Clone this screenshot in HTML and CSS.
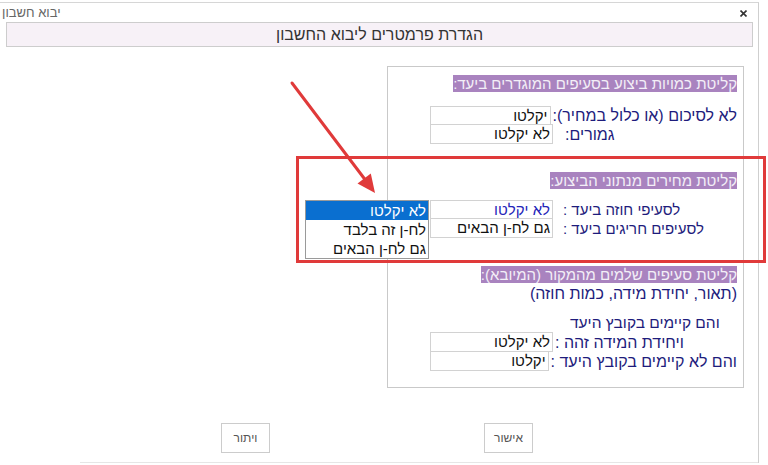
FILE: index.html
```html
<!DOCTYPE html>
<html lang="he">
<head>
<meta charset="utf-8">
<title>יבוא חשבון</title>
<link rel="stylesheet" href="styles.css">
</head>
<body>
<div class="screen">
  <div class="window">
    <div class="titlebar">
      <span class="title">יבוא חשבון</span>
      <svg class="close" width="7" height="7" viewBox="0 0 7 7"><path d="M0.5 0.5 L6.5 6.5 M6.5 0.5 L0.5 6.5" stroke="#333" stroke-width="1.6"/></svg>
    </div>
    <div class="header">הגדרת פרמטרים ליבוא החשבון</div>
    <div class="main">
      <div class="panel">
        <div class="heading"><span>קליטת כמויות ביצוע בסעיפים המוגדרים ביעד:</span></div>
        <div class="row first">
          <span class="label g2">לא לסיכום (או כלול במחיר):</span>
          <span class="box">יקלטו</span>
        </div>
        <div class="row">
          <span class="label g12">גמורים:</span>
          <span class="box">לא יקלטו</span>
        </div>

        <div class="heading section"><span>קליטת מחירים מנתוני הביצוע:</span></div>
        <div class="row first2">
          <span class="label small g10">לסעיפי חוזה ביעד :</span>
          <span class="box blue">לא יקלטו</span>
        </div>
        <div class="row">
          <span class="label small g10">לסעיפים חריגים ביעד :</span>
          <span class="box">גם לח-ן הבאים</span>
        </div>

        <div class="heading section"><span>קליטת סעיפים שלמים מהמקור (המיובא):</span></div>
        <div class="note">(תאור, יחידת מידה, כמות חוזה)</div>
        <div class="subline">והם קיימים בקובץ היעד</div>
        <div class="row">
          <span class="label g2">ויחידת המידה זהה :</span>
          <span class="box">לא יקלטו</span>
        </div>
        <div class="row">
          <span class="label g2">והם לא קיימים בקובץ היעד :</span>
          <span class="box">יקלטו</span>
        </div>
      </div>
    </div>
    <div class="buttons">
      <button class="btn">ויתור</button>
      <button class="btn">אישור</button>
    </div>
  </div>

  <div class="redbox"></div>
  <ul class="dropdown">
    <li class="selected">לא יקלטו</li>
    <li>לח-ן זה בלבד</li>
    <li>גם לח-ן הבאים</li>
  </ul>
  <svg class="arrow" width="768" height="465" viewBox="0 0 768 465">
    <line x1="292" y1="83" x2="365" y2="179.5" stroke="#e03a3a" stroke-width="3" stroke-linecap="round"/>
    <polygon points="375,193 357.5,183.6 370.8,173.6" fill="#e03a3a"/>
  </svg>
</div>
</body>
</html>
```
FILE: styles.css
```css
* { box-sizing: border-box; }

html, body {
  margin: 0;
  padding: 0;
  background: #ffffff;
}

body {
  font-family: "Liberation Sans", "DejaVu Sans", sans-serif;
  color: #222;
}

.screen {
  position: relative;
  width: 768px;
  height: 465px;
  overflow: hidden;
}

.window {
  margin-top: 2px;
  width: 759px;
  border-top: 1px solid #d6d6d6;
  border-right: 1px solid #cfcfcf;
}

.titlebar {
  height: 19px;
  display: flex;
  justify-content: space-between;
  align-items: center;
  padding: 0 11px 0 2px;
}

.title {
  font-size: 13px;
  color: #666;
  direction: rtl;
}

.close {
  display: block;
  margin-top: 2px;
}

.header {
  margin: 0 5px 0 6px;
  height: 25px;
  background: #f7f1f7;
  border: 1px solid #cdcdcd;
  text-align: center;
  font-size: 16px;
  line-height: 23px;
  color: #333;
  direction: rtl;
}

.main {
  display: flex;
  justify-content: flex-end;
  padding-top: 19px;
  padding-right: 14px;
}

.panel {
  width: 357px;
  height: 322px;
  border: 1px solid #c9c9c9;
  direction: rtl;
  padding: 8px 6px 0 42px;
}

.heading {
  text-align: right;
  font-size: 15px;
  line-height: 18px;
  height: 18px;
}

.heading span {
  background: #a983bf;
  color: #f3eff7;
}

.heading.section {
  margin-top: 28px;
}

.row {
  display: flex;
  justify-content: flex-end;
  align-items: center;
  height: 19px;
}

.row.first {
  margin-top: 13px;
}

.row.first2 {
  margin-top: 10px;
}

.label {
  font-size: 16px;
  color: #1e1c7c;
  white-space: nowrap;
}

.label.small {
  font-size: 15px;
}

.g2 { margin-left: 2px; }
.g10 { margin-left: 10px; }
.g12 { margin-left: 12px; }

.box {
  width: 123px;
  height: 20px;
  margin-top: -1px;
  border: 1px solid #d2d2d2;
  background: #fff;
  font-size: 15px;
  line-height: 18px;
  padding-right: 2px;
  color: #111;
  text-align: right;
}

.row.first .box,
.row.first2 .box {
  margin-top: 1px;
}

.box.blue {
  color: #2424b8;
}

.note {
  font-size: 16px;
  line-height: 18px;
  color: #1e1c7c;
  margin-top: 1px;
  white-space: nowrap;
}

.subline {
  font-size: 15.5px;
  line-height: 18px;
  color: #1e1c7c;
  text-align: left;
  padding-left: 140px;
  margin-top: 11px;
  margin-bottom: 1px;
  white-space: nowrap;
}

.buttons {
  margin-left: 80px;
  margin-top: 35px;
  padding-left: 141px;
  padding-bottom: 9px;
  border-bottom: 1px solid #e6e6e6;
  display: flex;
  gap: 214px;
}

.btn {
  width: 49px;
  height: 30px;
  border: 1px solid #cccccc;
  background: #fff;
  font-family: "Liberation Sans", "DejaVu Sans", sans-serif;
  font-size: 12px;
  color: #555;
  padding: 0;
  direction: rtl;
}

/* overlays */
.redbox {
  position: absolute;
  left: 296px;
  top: 156px;
  width: 470px;
  height: 107px;
  border: 3px solid #e03a3a;
}

.dropdown {
  position: absolute;
  left: 305px;
  top: 200px;
  width: 124px;
  margin: 0;
  padding: 0;
  list-style: none;
  border: 1px solid #9a9a9a;
  background: #fff;
  direction: rtl;
}

.dropdown li {
  height: 19px;
  font-size: 15px;
  line-height: 19px;
  padding-right: 2px;
  color: #111;
}

.dropdown li.selected {
  background: #0a6fd0;
  color: #fff;
}

.arrow {
  position: absolute;
  left: 0;
  top: 0;
  pointer-events: none;
}
```
